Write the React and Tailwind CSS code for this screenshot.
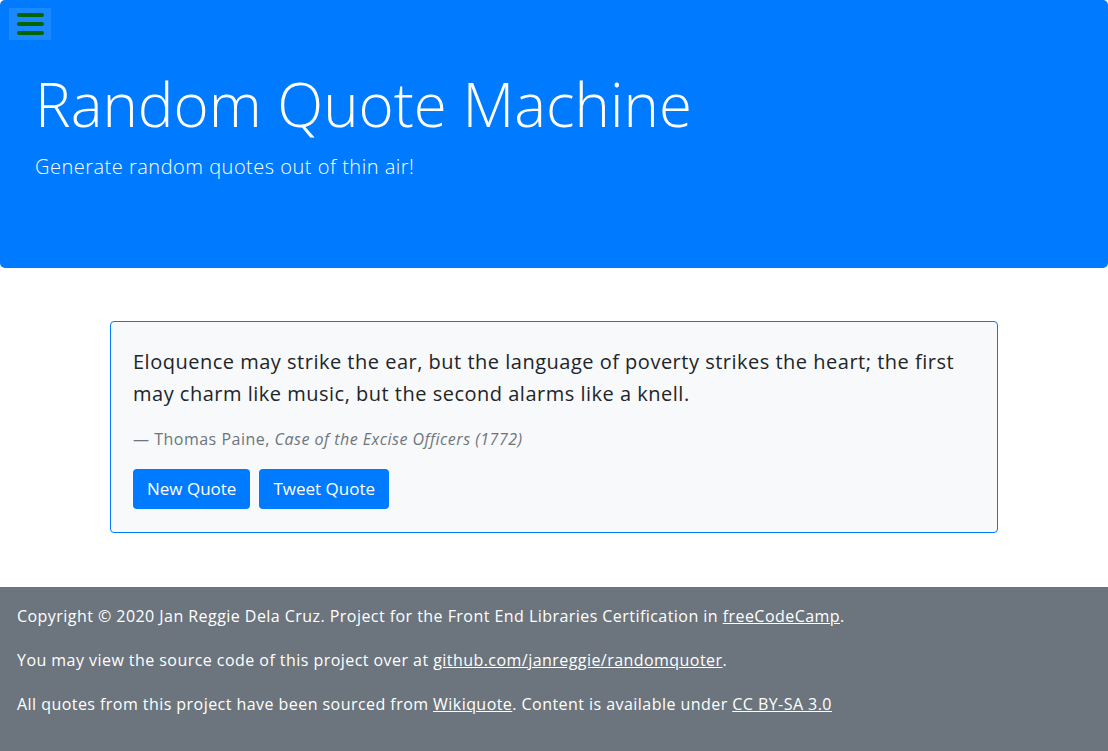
import { useState } from 'react';

const quote = {
  text: 'Eloquence may strike the ear, but the language of poverty strikes the heart; the first may charm like music, but the second alarms like a knell.',
  author: 'Thomas Paine',
  source: 'Case of the Excise Officers (1772)',
};

const Hamburger = () => (
  <button className="w-[42px] h-[32px] bg-white/10 flex flex-col items-center justify-center gap-[5px]">
    <span className="block w-[27px] h-[4px] rounded-full bg-[#006400]" />
    <span className="block w-[27px] h-[4px] rounded-full bg-[#006400]" />
    <span className="block w-[27px] h-[4px] rounded-full bg-[#006400]" />
  </button>
);

export default function App() {
  const [current] = useState(quote);

  return (
    <div className="min-h-[751px] flex flex-col bg-white text-[#212529] font-['Open_Sans',sans-serif]">
      <header className="bg-[#007bff] rounded-[5px] h-[268px] px-[9px] pt-[8px] text-white">
        <Hamburger />
        <div className="pl-[26px] pt-[28px]">
          <h1 className="text-[60px] leading-[1.2] font-light">Random Quote Machine</h1>
          <p className="mt-[12px] text-[20px] font-light tracking-[0.5px]">Generate random quotes out of thin air!</p>
        </div>
      </header>

      <main className="flex-1 flex justify-center pt-[53px]">
        <div className="w-[888px] h-[212px] border border-[#007bff] rounded-[4px] bg-[#f8f9fa] px-[22px] pt-[24px]">
          <p className="text-[20px] leading-[32px] tracking-[0.5px]">{current.text}</p>
          <p className="mt-[17px] text-[16px] text-[#6c757d] tracking-[0.5px]">
            — {current.author}, <em>{current.source}</em>
          </p>
          <div className="mt-[18px] flex gap-[9px]">
            <button className="h-[40px] px-[14px] rounded-[4px] bg-[#007bff] text-white text-[17px]">New Quote</button>
            <button className="h-[40px] px-[14px] rounded-[4px] bg-[#007bff] text-white text-[17px]">Tweet Quote</button>
          </div>
        </div>
      </main>

      <footer className="mt-[54px] h-[164px] bg-[#6c757d] text-white text-[16px] px-[17px] pt-[17px] flex flex-col gap-[20px] leading-[24px] tracking-[0.45px]">
        <p>
          Copyright © 2020 Jan Reggie Dela Cruz. Project for the Front End Libraries Certification in{' '}
          <a href="#" className="underline">freeCodeCamp</a>.
        </p>
        <p>
          You may view the source code of this project over at{' '}
          <a href="#" className="underline">github.com/janreggie/randomquoter</a>.
        </p>
        <p>
          All quotes from this project have been sourced from{' '}
          <a href="#" className="underline">Wikiquote</a>. Content is available under{' '}
          <a href="#" className="underline">CC BY-SA 3.0</a>
        </p>
      </footer>
    </div>
  );
}
